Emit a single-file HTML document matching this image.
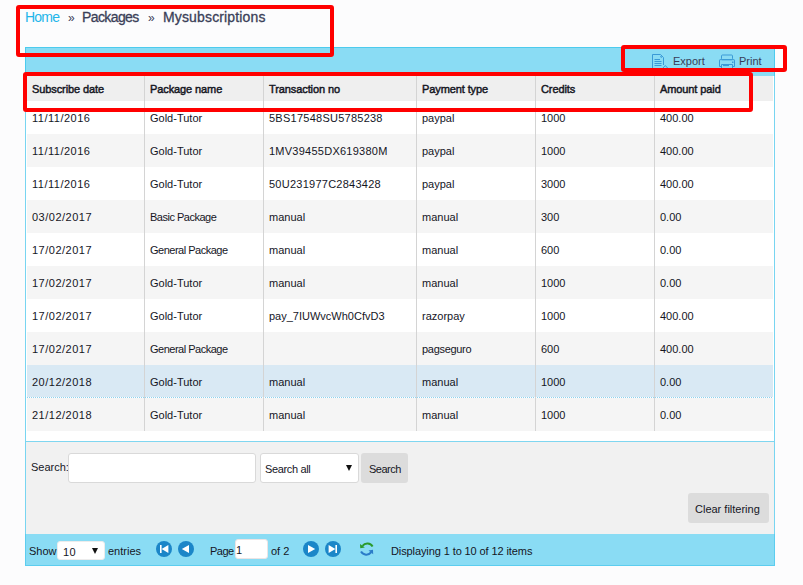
<!DOCTYPE html>
<html><head><meta charset="utf-8">
<style>
*{margin:0;padding:0;box-sizing:border-box}
html,body{width:803px;height:585px;overflow:hidden;background:#fcfcfd;font-family:"Liberation Sans",sans-serif;color:#15161f}
.a{position:absolute}
.bc{top:9px;font-size:14px;white-space:nowrap;line-height:16px}
.home{color:#1fb6ea;left:25px;letter-spacing:-0.8px}
.dk{color:#3a4058;-webkit-text-stroke:0.3px #3a4058}
.red{position:absolute;border:4px solid #ff0000;border-radius:3px}
#panel{left:25px;top:47px;width:750px;height:519px;border:1px solid #78d5f1;background:#fff}
#tb{left:-1px;top:-1px;width:750px;height:29px;background:#8adcf4;border:1px solid #4ccbee;border-bottom:0}
.tbt{font-size:11px;color:#383c58;top:7px;line-height:12px}
#hdr{left:0;top:28px;width:747px;height:25px;background:#efefef}
.ht{font-size:11px;font-weight:normal;-webkit-text-stroke:0.45px #15161f;letter-spacing:-0.1px;top:7px;line-height:12px;color:#15161f}
.vl{position:absolute;width:1px;background:#d4d4d4}
.row{position:absolute;left:1px;width:746px;height:33px}
.g{background:#f5f5f5}
.sel{background:#d9e9f4}
.dots{position:absolute;left:0;bottom:0;width:746px;height:1px;background:repeating-linear-gradient(90deg,#8fd2ee 0 1px,#fff 1px 2px)}
.c{position:absolute;top:11px;margin-left:-1px;font-size:11px;line-height:12px;white-space:nowrap;color:#15161f}
.d{letter-spacing:0.5px}
.t{letter-spacing:0.25px}
.n{letter-spacing:-0.5px}
#srch{left:0;top:393px;width:748px;height:94px;background:#f1f1f1;border-top:1px solid #7fd6f0}
#ftr{left:-1px;top:486px;width:750px;height:32px;background:#8adcf4;border:1px solid #5ccdef;border-top:0}
.ft{font-size:11px;line-height:12px;top:11px;color:#15161f;white-space:nowrap}
.sm{font-size:11px;line-height:12px}
</style></head><body>
<div class="a bc home">Home</div>
<div class="a bc" style="left:68px;font-size:12px;color:#3a4058;top:10px">&raquo;</div>
<div class="a bc dk" style="left:82px;letter-spacing:-0.6px">Packages</div>
<div class="a bc" style="left:148px;font-size:12px;color:#3a4058;top:10px">&raquo;</div>
<div class="a bc dk" style="left:163px;letter-spacing:0.15px">Mysubscriptions</div>

<div class="a" id="panel">
  <div class="a" id="tb">
    <div class="a tbt" style="left:647px">Export</div>
    <div class="a tbt" style="left:713px">Print</div>
  </div>
  <div class="a" id="hdr">
    <div class="a ht" style="left:6px">Subscribe date</div>
    <div class="a ht" style="left:124px">Package name</div>
    <div class="a ht" style="left:243px">Transaction no</div>
    <div class="a ht" style="left:396px">Payment type</div>
    <div class="a ht" style="left:515px">Credits</div>
    <div class="a ht" style="left:634px">Amount paid</div>
  </div>
  <div id="rows" class="a" style="left:0;top:53px;width:748px;height:340px">
    <div class="row" style="top:0"><div class="c d" style="left:6px">11/11/2016</div><div class="c" style="left:124px">Gold-Tutor</div><div class="c t" style="left:243px">5BS17548SU5785238</div><div class="c" style="left:396px">paypal</div><div class="c" style="left:515px">1000</div><div class="c" style="left:634px">400.00</div></div>
    <div class="row g" style="top:33px"><div class="c d" style="left:6px">11/11/2016</div><div class="c" style="left:124px">Gold-Tutor</div><div class="c t" style="left:243px">1MV39455DX619380M</div><div class="c" style="left:396px">paypal</div><div class="c" style="left:515px">1000</div><div class="c" style="left:634px">400.00</div></div>
    <div class="row" style="top:66px"><div class="c d" style="left:6px">11/11/2016</div><div class="c" style="left:124px">Gold-Tutor</div><div class="c t" style="left:243px">50U231977C2843428</div><div class="c" style="left:396px">paypal</div><div class="c" style="left:515px">3000</div><div class="c" style="left:634px">400.00</div></div>
    <div class="row g" style="top:99px"><div class="c d" style="left:6px">03/02/2017</div><div class="c n" style="left:124px">Basic Package</div><div class="c" style="left:243px">manual</div><div class="c" style="left:396px">manual</div><div class="c" style="left:515px">300</div><div class="c" style="left:634px">0.00</div></div>
    <div class="row" style="top:132px"><div class="c d" style="left:6px">17/02/2017</div><div class="c n" style="left:124px">General Package</div><div class="c" style="left:243px">manual</div><div class="c" style="left:396px">manual</div><div class="c" style="left:515px">600</div><div class="c" style="left:634px">0.00</div></div>
    <div class="row g" style="top:165px"><div class="c d" style="left:6px">17/02/2017</div><div class="c" style="left:124px">Gold-Tutor</div><div class="c" style="left:243px">manual</div><div class="c" style="left:396px">manual</div><div class="c" style="left:515px">1000</div><div class="c" style="left:634px">0.00</div></div>
    <div class="row" style="top:198px"><div class="c d" style="left:6px">17/02/2017</div><div class="c" style="left:124px">Gold-Tutor</div><div class="c" style="left:243px">pay_7IUWvcWh0CfvD3</div><div class="c" style="left:396px">razorpay</div><div class="c" style="left:515px">1000</div><div class="c" style="left:634px">400.00</div></div>
    <div class="row g" style="top:231px"><div class="c d" style="left:6px">17/02/2017</div><div class="c n" style="left:124px">General Package</div><div class="c" style="left:396px;letter-spacing:-0.3px">pagseguro</div><div class="c" style="left:515px">600</div><div class="c" style="left:634px">400.00</div></div>
    <div class="row sel" style="top:264px"><div class="dots"></div><div class="c d" style="left:6px">20/12/2018</div><div class="c" style="left:124px">Gold-Tutor</div><div class="c" style="left:243px">manual</div><div class="c" style="left:396px">manual</div><div class="c" style="left:515px">1000</div><div class="c" style="left:634px">0.00</div></div>
    <div class="row g" style="top:297px"><div class="c d" style="left:6px">21/12/2018</div><div class="c" style="left:124px">Gold-Tutor</div><div class="c" style="left:243px">manual</div><div class="c" style="left:396px">manual</div><div class="c" style="left:515px">1000</div><div class="c" style="left:634px">0.00</div></div>
  </div>
  <div class="vl" style="left:118px;top:28px;height:355px"></div>
  <div class="vl" style="left:237px;top:28px;height:355px"></div>
  <div class="vl" style="left:390px;top:28px;height:355px"></div>
  <div class="vl" style="left:509px;top:28px;height:355px"></div>
  <div class="vl" style="left:628px;top:28px;height:355px"></div>

  <div class="a" id="srch">
    <div class="a sm" style="left:5px;top:19px">Search:</div>
    <div class="a" style="left:42px;top:11px;width:188px;height:30px;background:#fff;border:1px solid #d9d9d9;border-radius:3px"></div>
    <div class="a" style="left:234px;top:11px;width:99px;height:30px;background:#fff;border:1px solid #d9d9d9;border-radius:3px"></div>
    <div class="a sm" style="left:239px;top:21px;letter-spacing:-0.35px">Search all</div>
    <svg class="a" style="left:320px;top:23px" width="6" height="6" viewBox="0 0 6 6"><path d="M0 0H6L3 6Z" fill="#111"/></svg>
    <div class="a" style="left:335px;top:11px;width:47px;height:30px;background:#dcdcdc;border-radius:3px"></div>
    <div class="a sm" style="left:343px;top:21px;letter-spacing:-0.5px">Search</div>
    <div class="a" style="left:662px;top:51px;width:81px;height:30px;background:#dcdcdc;border-radius:3px"></div>
    <div class="a sm" style="left:669px;top:61px">Clear filtering</div>
  </div>
  <div class="a" id="ftr">
    <div class="a ft" style="left:3px">Show</div>
    <div class="a" style="left:31px;top:7px;width:48px;height:19px;background:#fff;border:1px solid #ececec;border-radius:3px"></div>
    <div class="a ft" style="left:37px;top:12px;letter-spacing:0.4px">10</div>
    <svg class="a" style="left:66px;top:14px" width="6" height="6" viewBox="0 0 6 6"><path d="M0 0H6L3 6Z" fill="#111"/></svg>
    <div class="a ft" style="left:82px">entries</div>
    <div class="a ft" style="left:184px;letter-spacing:-0.5px">Page</div>
    <div class="a" style="left:209px;top:5px;width:33px;height:20px;background:#fff;border:1px solid #ece4e4;border-radius:3px"></div>
    <div class="a ft" style="left:210px;top:10px">1</div>
    <div class="a ft" style="left:245px">of 2</div>
    <div class="a ft" style="left:365px;letter-spacing:-0.1px">Displaying 1 to 10 of 12 items</div>
  </div>
</div>

<!-- toolbar icons (page coords) -->
<svg class="a" style="left:649px;top:52px" width="22" height="18" viewBox="0 0 22 18">
  <g fill="none" stroke="#3a9ad6" stroke-width="1">
    <path d="M3.5 16V2.5H11.5L14.5 5.5V13"/>
    <circle cx="12.4" cy="4.6" r="0.8" stroke-width="0.9"/>
    <path d="M5.5 7.5H11M5.5 9.5H12.5M5.5 11.5H12.5M5.5 13.5H12.5"/>
    <path d="M13.5 16.5L16.3 13.5L19 16.5"/>
  </g>
</svg>
<svg class="a" style="left:716px;top:52px" width="22" height="18" viewBox="0 0 22 18">
  <g fill="none" stroke="#3a9ad6" stroke-width="1">
    <rect x="5.5" y="3" width="11" height="4.7" rx="1"/>
    <path d="M5.5 14.5H3.5V8.2Q3.5 7.7 4 7.7H18Q18.5 7.7 18.5 8.2V14.5H16.5"/>
    <path d="M5.5 16V12.5H16.5V16"/>
  </g>
  <path d="M7 13.5H13" stroke="#3a9ad6" stroke-width="1.2"/>
  <rect x="16" y="9.5" width="1.5" height="1.5" fill="#3a9ad6"/>
</svg>

<!-- pager icons (page coords) -->
<svg class="a" style="left:156px;top:541px" width="186" height="16" viewBox="0 0 186 16">
  <circle cx="8" cy="8" r="8" fill="#1b86c8"/>
  <rect x="4" y="4" width="1.6" height="8" fill="#fff"/>
  <path d="M5.6 8L12.4 4V12Z" fill="#fff"/>
  <circle cx="30" cy="8" r="8" fill="#1b86c8"/>
  <path d="M25.8 8L33 4V12Z" fill="#fff"/>
  <circle cx="155" cy="8" r="8" fill="#1b86c8"/>
  <path d="M159.2 8L152 4V12Z" fill="#fff"/>
  <circle cx="177" cy="8" r="8" fill="#1b86c8"/>
  <path d="M179.4 8L172.6 4V12Z" fill="#fff"/>
  <rect x="179.4" y="4" width="1.6" height="8" fill="#fff"/>
</svg>
<svg class="a" style="left:356px;top:539px" width="22" height="20" viewBox="0 0 22 20">
  <path d="M16.6 7.6A6.2 6.2 0 0 0 6.5 6.8" fill="none" stroke="#2a9a2a" stroke-width="2"/>
  <path d="M4 5L4.3 9.3L8.8 8.5Z" fill="#2a9a2a"/>
  <path d="M5 12.6A6.2 6.2 0 0 0 15.3 13.2" fill="none" stroke="#2b7cc8" stroke-width="2"/>
  <path d="M17.2 15.2L17 10.8L12.5 11.6Z" fill="#2b7cc8"/>
</svg>

<div class="red" style="left:16px;top:5px;width:318px;height:52px"></div>
<div class="red" style="left:621px;top:45px;width:166px;height:27px"></div>
<div class="red" style="left:23px;top:72px;width:730px;height:40px"></div>
</body></html>
